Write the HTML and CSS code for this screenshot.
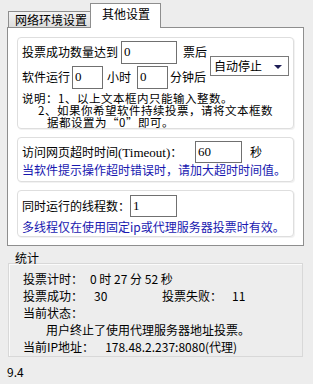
FILE: index.html
```html
<!DOCTYPE html>
<html lang="zh-CN">
<head>
  <meta charset="UTF-8" />
  <title>其他设置</title>
  <link rel="stylesheet" href="styles.css">
</head>
<body>
  <div class="tabs">
    <div class="tab">网络环境设置</div>
    <div class="tab active">其他设置</div>
  </div>

  <div class="panel">
    <div class="group group-stop">
      <div class="stop-line">
        <div class="stop-rows">
          <div class="row">
            <span>投票成功数量达到</span>
            <span class="field w56 gap-l3">0</span>
            <span class="gap-l6">票后</span>
          </div>
          <div class="row">
            <span>软件运行</span>
            <span class="field w31 gap-l2">0</span>
            <span class="gap-l4">小时</span>
            <span class="field w31 gap-l6">0</span>
            <span class="gap-l2">分钟后</span>
          </div>
        </div>
        <div class="select">自动停止<span class="arrow"></span></div>
      </div>
      <div class="note">
        <div>说明：1、以上文本框内只能输入整数。</div>
        <div class="indent1">2、如果你希望软件持续投票，请将文本框数</div>
        <div class="indent2">据都设置为“0”即可。</div>
      </div>
    </div>

    <div class="group group-timeout">
      <div class="row row-22">
        <span class="label-timeout">访问网页超时时间<span class="latin">(Timeout)</span>：</span>
        <span class="field w47">60</span>
        <span class="gap-l8">秒</span>
      </div>
      <div class="hint">当软件提示操作超时错误时，请加大超时时间值。</div>
    </div>

    <div class="group group-threads">
      <div class="row row-22">
        <span>同时运行的线程数：</span>
        <span class="field w47">1</span>
      </div>
      <div class="hint">多线程仅在使用固定ip或代理服务器投票时有效。</div>
    </div>
  </div>

  <div class="stats-title">统计</div>
  <div class="stats">
    <div class="stat-row">投票计时：<span class="val v1">0 时 27 分 52 秒</span></div>
    <div class="stat-row">
      <span class="cell">投票成功：<span class="val v2">30</span></span>投票失败：<span class="val v3">11</span>
    </div>
    <div class="stat-row">当前状态：</div>
    <div class="stat-row status">用户终止了使用代理服务器地址投票。</div>
    <div class="stat-row">当前IP地址：<span class="val v4">178.48.2.237:8080(代理)</span></div>
  </div>

  <div class="version">9.4</div>
</body>
</html>
```

FILE: styles.css
```css
* {
  box-sizing: border-box;
  margin: 0;
  padding: 0;
}

body {
  font-family: "Noto Sans CJK SC", "Noto Sans", sans-serif;
  font-size: 12px;
  line-height: 12px;
  color: #000;
  background-color: #ededed;
  width: 313px;
  height: 384px;
  overflow: hidden;
}

/* tabs */
.tabs {
  display: flex;
  align-items: flex-end;
  height: 28px;
  padding-left: 8px;
  margin-bottom: -1px;
  position: relative;
  z-index: 2;
}

.tab {
  width: 82px;
  height: 16px;
  margin-bottom: 1px;
  padding-left: 6px;
  line-height: 15px;
  border: 1px solid #8e8e8e;
  border-bottom: none;
  border-right: none;
  background: linear-gradient(#f3f3f3, #dedede);
}

.tab.active {
  width: 71px;
  height: 25px;
  margin-bottom: 0;
  padding-left: 11px;
  padding-top: 2px;
  border-right: 1px solid #8e8e8e;
  background: #fff;
}

.panel {
  margin-left: 7px;
  width: 297px;
  height: 219px;
  padding: 9px 9px 8px;
  background: #fff;
  border: 1px solid #8e8e8e;
  display: flex;
  flex-direction: column;
  gap: 8px;
}

.group {
  border: 1px solid #dedede;
  border-radius: 4px;
  padding: 0 4px;
  background: #fff;
  box-shadow: 1px 1px 0 #f2f2f2;
}

.group-stop {
  padding-top: 2px;
}

.stop-line {
  display: flex;
  align-items: center;
}

.stop-rows {
  display: flex;
  flex-direction: column;
  gap: 1px;
}

.row {
  display: flex;
  align-items: center;
  height: 24px;
  white-space: nowrap;
}

.row-22 {
  height: 22px;
}

.field {
  display: inline-block;
  height: 23px;
  border: 1px solid #707070;
  background: #fff;
  padding-left: 2px;
  line-height: 20px;
  font-family: "Liberation Serif", serif;
  font-size: 13px;
}

.row-22 .field {
  height: 22px;
  line-height: 19px;
}

.w56 { width: 56px; }
.w31 { width: 31px; }
.w47 { width: 47px; }

.gap-l2 { margin-left: 2px; }
.gap-l3 { margin-left: 3px; }
.gap-l4 { margin-left: 4px; }
.gap-l6 { margin-left: 6px; }
.gap-l8 { margin-left: 8px; }

.select {
  position: relative;
  width: 80px;
  height: 20px;
  margin-left: 3px;
  margin-top: 3px;
  padding-left: 3px;
  line-height: 18px;
  border: 1px solid #7a7a7a;
  background: #fff;
}

.arrow {
  position: absolute;
  right: 6px;
  top: 8px;
  width: 0;
  height: 0;
  border-left: 4px solid transparent;
  border-right: 4px solid transparent;
  border-top: 4px solid #1d1d55;
}

.note {
  margin-top: 3px;
  font-size: 11.5px;
  letter-spacing: 0.5px;
  white-space: nowrap;
}

.indent1 { padding-left: 16px; }
.indent2 { padding-left: 25px; }

.group-timeout {
  padding-top: 3px;
  padding-bottom: 5px;
}

.group-threads {
  padding-top: 4px;
  padding-bottom: 3px;
}

.label-timeout {
  width: 173px;
}

.latin {
  font-family: "Liberation Serif", serif;
  font-size: 13px;
}

.hint {
  color: #1818b0;
  margin-top: 1px;
  white-space: nowrap;
}

.group-threads .hint {
  margin-top: 4px;
}

/* statistics */
.stats-title {
  margin: 6px 0 -1px 15px;
}

.stats {
  margin-left: 8px;
  width: 295px;
  height: 94px;
  padding: 6px 0 0 14px;
  border: 1px solid #d8d8d8;
  box-shadow: inset 1px 1px 0 #fbfbfb;
}

.stat-row {
  line-height: 17px;
  white-space: nowrap;
}

.cell {
  display: inline-block;
  width: 139px;
}

.v1 { margin-left: 7px; }
.v2 { margin-left: 11px; }
.v3 { margin-left: 10px; }
.v4 { margin-left: 11px; }

.status {
  padding-left: 23px;
}

.version {
  margin: 8px 0 0 7px;
  line-height: 14px;
}
```
